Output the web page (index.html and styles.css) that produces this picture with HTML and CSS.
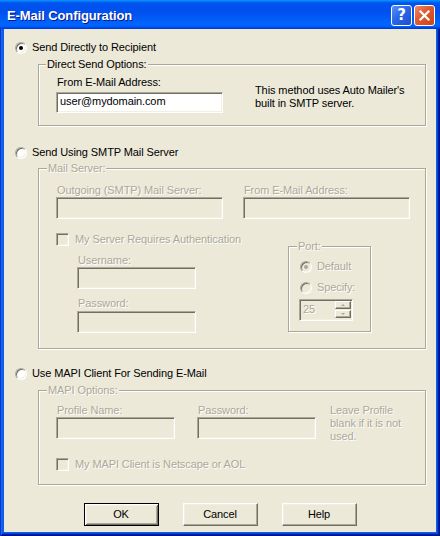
FILE: index.html
```html
<!DOCTYPE html>
<html>
<head>
<meta charset="utf-8">
<link rel="stylesheet" href="styles.css">
</head>
<body>
<div class="window">
  <div class="titlebar">
    <span class="title">E-Mail Configuration</span>
    <div class="tb-btns">
      <span class="tb-btn tb-help">?</span>
      <span class="tb-btn tb-close"><svg width="13" height="13" viewBox="0 0 13 13"><path d="M2.5 2.5 L10.5 10.5 M10.5 2.5 L2.5 10.5" stroke="#fff" stroke-width="2.2" stroke-linecap="square" fill="none"/></svg></span>
    </div>
  </div>
  <div class="client">
    <div class="opt opt1"><span class="radio on"></span><span>Send Directly to Recipient</span></div>

    <div class="group g1">
      <span class="legend">Direct Send Options:</span>
      <div class="row">
        <div class="field f167">
          <div class="lbl">From E-Mail Address:</div>
          <div class="edit e21 enabled">user@mydomain.com</div>
        </div>
        <div class="note n1">This method uses Auto Mailer's<br>built in SMTP server.</div>
      </div>
    </div>

    <div class="opt opt2"><span class="radio"></span><span>Send Using SMTP Mail Server</span></div>

    <div class="group g2 dis">
      <span class="legend">Mail Server:</span>
      <div class="row">
        <div class="field f167">
          <div class="lbl">Outgoing (SMTP) Mail Server:</div>
          <div class="edit"></div>
        </div>
        <div class="field f167 ml20">
          <div class="lbl">From E-Mail Address:</div>
          <div class="edit"></div>
        </div>
      </div>
      <div class="check chk1"><span class="box"></span><span>My Server Requires Authentication</span></div>
      <div class="row">
        <div class="field f119 auth">
          <div class="lbl">Username:</div>
          <div class="edit"></div>
          <div class="lbl pw">Password:</div>
          <div class="edit pwe"></div>
        </div>
        <div class="group port">
          <span class="legend">Port:</span>
          <div class="opt popt"><span class="radio on"></span><span>Default</span></div>
          <div class="opt popt spec"><span class="radio"></span><span>Specify:</span></div>
          <div class="spin">
            <span class="spin-val">25</span>
            <span class="spin-btns"><span class="sb up"></span><span class="sb down"></span></span>
          </div>
        </div>
      </div>
    </div>

    <div class="opt opt3"><span class="radio"></span><span>Use MAPI Client For Sending E-Mail</span></div>

    <div class="group g3 dis">
      <span class="legend">MAPI Options:</span>
      <div class="row">
        <div class="field f119">
          <div class="lbl">Profile Name:</div>
          <div class="edit"></div>
        </div>
        <div class="field f119 ml22">
          <div class="lbl">Password:</div>
          <div class="edit"></div>
        </div>
        <div class="note n3">Leave Profile<br>blank if it is not<br>used.</div>
      </div>
      <div class="check chk3"><span class="box"></span><span>My MAPI Client is Netscape or AOL</span></div>
    </div>

    <div class="buttons">
      <button class="btn default">OK</button>
      <button class="btn">Cancel</button>
      <button class="btn">Help</button>
    </div>
  </div>
</div>
</body>
</html>
```

FILE: styles.css
```css
html, body {
  margin: 0;
  padding: 0;
  background: #0855dd;
}
body {
  font-family: "Liberation Sans", Arial, sans-serif;
  font-size: 11px;
  line-height: 13px;
  letter-spacing: -0.1px;
  color: #000;
}
.window {
  width: 440px;
  height: 536px;
  box-sizing: border-box;
  display: flex;
  flex-direction: column;
  background: #0b5fe8;
  box-shadow: inset 1px 0 #0831d9, inset -1px -1px #00138c, inset 2px 0 #166aee, inset -2px -2px #001ea0, inset -3px -3px #0a45d8;
}
.titlebar {
  height: 29px;
  flex: none;
  display: flex;
  align-items: flex-start;
  justify-content: space-between;
  background: linear-gradient(180deg, #0997ff, #0053ee 10%, #0050ee 40%, #0066ff 86%, #005bff 92%, #003dd7 97%, #003dd7);
}
.title {
  margin: 8px 0 0 7px;
  font-size: 13px;
  line-height: 15px;
  font-weight: bold;
  color: #fff;
  text-shadow: 1px 1px #0a1883;
  letter-spacing: -0.1px;
}
.tb-btns {
  display: flex;
  gap: 2px;
  margin: 5px 5px 0 0;
}
.tb-btn {
  width: 21px;
  height: 21px;
  box-sizing: border-box;
  border: 1px solid #fff;
  border-radius: 3px;
  display: flex;
  align-items: center;
  justify-content: center;
}
.tb-help {
  background: linear-gradient(135deg, #5b92f8 0%, #2966e6 45%, #1c50d0 100%);
  color: #fff;
  font-family: "DejaVu Sans", sans-serif;
  font-weight: bold;
  font-size: 15px;
  line-height: 19px;
  letter-spacing: 0;
}
.tb-close {
  background: linear-gradient(135deg, #f0896a 0%, #e05c34 40%, #cc4418 100%);
}
.client {
  flex: 1;
  margin: 0 4px 4px 4px;
  background: #ece9d8;
  padding-top: 12px;
  display: flex;
  flex-direction: column;
  align-items: flex-start;
}
.opt {
  display: flex;
  align-items: center;
  gap: 5px;
  height: 13px;
  white-space: nowrap;
}
.opt1, .opt2, .opt3 { margin-left: 11px; }
.opt2 { margin-top: 20px; }
.opt3 { margin-top: 18px; }

.radio {
  width: 12px;
  height: 12px;
  box-sizing: border-box;
  border-radius: 50%;
  border: 1px solid;
  border-color: #aca899 #fff #fff #aca899;
  box-shadow: inset 1px 1px #716f64, inset -1px -1px #f1efe2;
  background: #fff;
  display: flex;
  align-items: center;
  justify-content: center;
  flex: none;
}
.radio.on::after {
  content: "";
  width: 4px;
  height: 4px;
  border-radius: 50%;
  background: #000;
}
.dis .radio { background: #ece9d8; }
.dis .radio.on::after { background: #aca899; }

.group {
  position: relative;
  box-sizing: border-box;
  width: 388px;
  margin-left: 34px;
  border: 1px solid #aca899;
  box-shadow: 1px 1px 0 #fff, inset 1px 1px 0 #fff;
}
.legend {
  position: absolute;
  top: -7px;
  left: 7px;
  padding: 0 1px;
  background: #ece9d8;
  line-height: 13px;
  white-space: nowrap;
}
.g2 > .legend, .g3 > .legend { left: 8px; }
.dis, .dis .legend {
  color: #aca899;
  text-shadow: 1px 1px #fff;
}
.row {
  display: flex;
  align-items: flex-start;
}
.field { display: flex; flex-direction: column; }
.f167 { width: 167px; }
.f119 { width: 119px; }
.ml20 { margin-left: 20px; }
.ml22 { margin-left: 22px; }
.lbl {
  padding-left: 1px;
  height: 13px;
  white-space: nowrap;
}
.edit {
  box-sizing: border-box;
  height: 22px;
  border: 1px solid;
  border-color: #aca899 #fff #fff #aca899;
  box-shadow: inset 1px 1px #716f64, inset -1px -1px #f1efe2;
  background: #ece9d8;
  padding: 3px 0 0 3px;
  white-space: nowrap;
}
.edit.enabled { background: #fff; color: #000; }
.e21 { height: 21px; padding-top: 2px; }
.note { white-space: nowrap; }

.g1 {
  margin-top: 10px;
  padding: 11px 0 12px 17px;
}
.g1 .edit { margin-top: 3px; }
.n1 { margin: 8px 0 0 32px; }

.g2 {
  margin-top: 9px;
  padding: 15px 0 15px 17px;
}
.check {
  display: flex;
  align-items: center;
  gap: 6px;
  height: 13px;
  white-space: nowrap;
}
.box {
  width: 13px;
  height: 13px;
  box-sizing: border-box;
  border: 1px solid;
  border-color: #aca899 #fff #fff #aca899;
  box-shadow: inset 1px 1px #716f64, inset -1px -1px #f1efe2;
  background: #ece9d8;
  flex: none;
}
.chk1 { margin-top: 14px; }
.auth {
  margin-left: 21px;
  padding-top: 8px;
}
.pw { margin-top: 8px; }
.pwe { margin-top: 1px; }

.group.port {
  width: 83px;
  height: 86px;
  margin-left: 92px;
  padding: 13px 0 0 11px;
}
.port .legend { left: 8px; }
.popt { gap: 5px; }
.spec { margin-top: 8px; }
.spin {
  margin: 5px 0 0 -1px;
  width: 54px;
  height: 22px;
  box-sizing: border-box;
  border: 1px solid;
  border-color: #aca899 #fff #fff #aca899;
  box-shadow: inset 1px 1px #716f64, inset -1px -1px #f1efe2;
  background: #ece9d8;
  display: flex;
  align-items: stretch;
  padding: 1px 1px 2px 1px;
}
.spin-val {
  flex: 1;
  padding: 2px 0 0 2px;
}
.spin-btns {
  display: flex;
  flex-direction: column;
  width: 16px;
  gap: 1px;
}
.sb {
  flex: 1;
  box-sizing: border-box;
  border: 1px solid;
  border-color: #fff #716f64 #716f64 #fff;
  box-shadow: inset -1px -1px #aca899;
  background: #ece9d8;
  display: flex;
  align-items: center;
  justify-content: center;
}
.sb.up::after {
  content: "";
  border-left: 2px solid transparent;
  border-right: 2px solid transparent;
  border-bottom: 2px solid #aca899;
}
.sb.down::after {
  content: "";
  border-left: 2px solid transparent;
  border-right: 2px solid transparent;
  border-top: 2px solid #aca899;
}

.g3 {
  margin-top: 10px;
  padding: 13px 0 13px 17px;
}
.n3 { margin-left: 14px; }
.chk3 { margin-top: 15px; }

.buttons {
  align-self: stretch;
  display: flex;
  justify-content: center;
  gap: 24px;
  margin-top: 18px;
}
.btn {
  width: 75px;
  height: 23px;
  box-sizing: border-box;
  margin: 0;
  padding: 0;
  font: inherit;
  letter-spacing: inherit;
  color: #000;
  background: #ece9d8;
  border: 1px solid;
  border-color: #fff #716f64 #716f64 #fff;
  box-shadow: inset -1px -1px #aca899, inset 1px 1px #f1efe2;
}
.btn.default {
  border: 1px solid #000;
  box-shadow: inset 1px 1px #fff, inset -1px -1px #716f64, inset 2px 2px #f1efe2, inset -2px -2px #aca899;
}
```
